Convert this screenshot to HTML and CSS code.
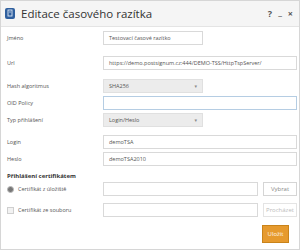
FILE: index.html
```html
<!DOCTYPE html>
<html lang="cs">
<head>
    <meta charset="UTF-8">
    <title>Editace časového razítka</title>
    <link rel="stylesheet" href="styles.css">
</head>
<body>
    <div class="dialog">
        <div class="titlebar">
            <div class="app-icon">
                <svg width="10" height="11" viewBox="0 0 10 11">
                    <rect x="0" y="0" width="10" height="11" rx="2" fill="#2f5f9e"/>
                    <rect x="3" y="2" width="4" height="6" fill="none" stroke="#dfe8f4" stroke-width="0.9"/>
                    <line x1="4" y1="4" x2="6" y2="4" stroke="#dfe8f4" stroke-width="0.7"/>
                </svg>
            </div>
            <div class="title">Editace časového razítka</div>
            <div class="controls">
                <span class="ctl">?</span>
                <span class="ctl min">_</span>
                <span class="ctl">×</span>
            </div>
        </div>

        <div class="body">
            <div class="row first">
                <label>Jméno</label>
                <div class="field short">Testovací časové razítko</div>
            </div>
            <div class="row gap-l">
                <label>Url</label>
                <div class="field">https://demo.postsignum.cz:444/DEMO-TSS/HttpTspServer/</div>
            </div>
            <div class="row gap-m">
                <label>Hash algoritmus</label>
                <div class="field short select">SHA256<span class="arrow">▾</span></div>
            </div>
            <div class="row">
                <label>OID Policy</label>
                <div class="field focus"></div>
            </div>
            <div class="row">
                <label>Typ přihlášení</label>
                <div class="field short select">Login/Heslo<span class="arrow">▾</span></div>
            </div>
            <div class="row gap-n">
                <label>Login</label>
                <div class="field">demoTSA</div>
            </div>
            <div class="row">
                <label>Heslo</label>
                <div class="field">demoTSA2010</div>
            </div>

            <div class="section">Přihlášení certifikátem</div>

            <div class="row cert">
                <label class="opt"><span class="radio"></span>Certifikát z úložiště</label>
                <div class="field"></div>
                <button class="btn">Vybrat</button>
            </div>
            <div class="row gap-s">
                <label class="opt"><span class="check"></span>Certifikát ze souboru</label>
                <div class="field"></div>
                <button class="btn disabled">Procházet</button>
            </div>

            <div class="footer">
                <button class="save">Uložit</button>
            </div>
        </div>
    </div>
</body>
</html>
```

FILE: styles.css
```css
body {
    margin: 0;
    font-family: "Open Sans", "DejaVu Sans", sans-serif;
    background: #ffffff;
    color: #444;
}
.dialog {
    width: 298px;
    height: 248px;
    border: 1px solid #d6d6d6;
    background: #ffffff;
    overflow: hidden;
}
.titlebar {
    box-sizing: border-box;
    height: 26px;
    display: flex;
    align-items: center;
    background: #f5f5f5;
    border-bottom: 1px solid #e4e4e4;
    padding: 0 6px 0 4px;
}
.app-icon {
    display: flex;
    margin-right: 6px;
}
.title {
    font-size: 11.5px;
    color: #333;
    flex: 1;
}
.controls {
    display: flex;
    gap: 6px;
    font-size: 9px;
    font-weight: bold;
    color: #555;
}
.ctl.min {
    position: relative;
    top: -2px;
}
.body {
    padding: 4px 2px 0 6px;
}
.row {
    display: flex;
    align-items: center;
    margin-top: 3px;
    height: 14px;
}
.row.first {
    margin-top: 0;
}
.row.gap-l {
    margin-top: 11px;
}
.row.gap-m {
    margin-top: 9px;
}
.row.gap-n {
    margin-top: 8px;
}
.row.gap-s {
    margin-top: 7px;
}
.row label {
    width: 96px;
    font-size: 5.5px;
    color: #555;
    flex: none;
}
.field {
    box-sizing: border-box;
    flex: 1;
    height: 14px;
    border: 1px solid #d9d9d9;
    background: #fff;
    font-size: 5.5px;
    color: #555;
    padding: 0 5px;
    display: flex;
    align-items: center;
    white-space: nowrap;
    overflow: hidden;
}
.field.short {
    flex: none;
    width: 100px;
}
.field.select {
    background: #ececec;
    border-color: #e0e0e0;
    justify-content: space-between;
}
.arrow {
    font-size: 5px;
    color: #888;
}
.field.focus {
    border-color: #b5cde3;
}
.section {
    height: 8px;
    line-height: 8px;
    font-size: 6px;
    font-weight: bold;
    color: #333;
    margin-top: 6px;
}
.row.cert {
    margin-top: 2px;
}
.opt {
    display: flex;
    align-items: center;
}
.radio, .check {
    width: 5px;
    height: 5px;
    border: 1px solid #cfcfcf;
    margin-right: 4px;
    background: #f2f2f2;
}
.radio {
    border-radius: 50%;
    background: #777;
    border-color: #bbb;
}
.btn {
    box-sizing: border-box;
    width: 34px;
    height: 14px;
    margin-left: 5px;
    border: 1px solid #d5d5d5;
    background: #fff;
    font-family: inherit;
    font-size: 6px;
    color: #888;
    padding: 0;
}
.btn.disabled {
    color: #bbb;
    border-color: #e4e4e4;
}
.footer {
    display: flex;
    justify-content: flex-end;
    margin-top: 8px;
    padding-right: 8px;
}
.save {
    box-sizing: border-box;
    width: 27px;
    height: 18px;
    border: 1px solid #c9831a;
    background: #e69a2e;
    color: #fff8ec;
    font-family: inherit;
    font-size: 6px;
    padding: 0;
}
```
